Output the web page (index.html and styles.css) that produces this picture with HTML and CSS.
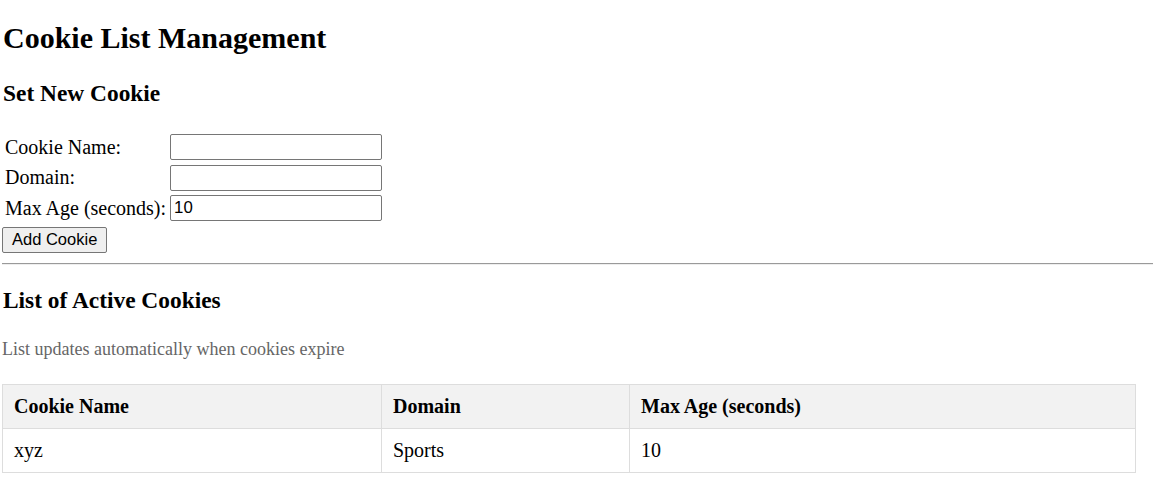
FILE: index.html
```html
<!DOCTYPE html>
<html>
<head>
<meta charset="utf-8">
<title>Cookie List Management</title>
<link rel="stylesheet" href="styles.css">
</head>
<body>
<h1 class="title">Cookie List Management</h1>
<h3 class="section first">Set New Cookie</h3>
<form class="cookie-form">
  <table class="form-table">
    <tr><td><label>Cookie Name:</label></td><td><input type="text" class="field"></td></tr>
    <tr><td><label>Domain:</label></td><td><input type="text" class="field"></td></tr>
    <tr><td><label>Max Age (seconds):</label></td><td><input type="text" class="field" value="10"></td></tr>
  </table>
  <div class="actions"><button type="button" class="add-btn">Add Cookie</button></div>
</form>
<hr class="divider">
<h3 class="section second">List of Active Cookies</h3>
<p class="note">List updates automatically when cookies expire</p>
<table class="cookie-table">
  <thead>
    <tr><th class="c1">Cookie Name</th><th class="c2">Domain</th><th class="c3">Max Age (seconds)</th></tr>
  </thead>
  <tbody>
    <tr><td>xyz</td><td>Sports</td><td>10</td></tr>
  </tbody>
</table>
</body>
</html>
```
FILE: styles.css
```css
html { background: #fff; }
body {
  margin: 0 0 0 2px;
  font-family: "Liberation Serif", "Times New Roman", serif;
  font-size: 20px;
  color: #000;
}
.title { font-size: 30px; margin: 21px 0 0 1px; line-height: 34px; }
.section { font-size: 23.4px; line-height: 27px; margin: 0 0 0 1px; }
.section.first { margin-top: 25px; margin-bottom: 24px; }
.section.second { margin-top: 22px; }
.cookie-form { margin: 0; }
.form-table { border-spacing: 2px; }
.form-table td { padding: 1px; }
.field {
  font-family: "Liberation Sans", Arial, sans-serif;
  font-size: 16.8px;
  width: 212px;
  height: 26px;
  box-sizing: border-box;
  padding: 1px 3px;
  border: 1px solid #767676;
  border-radius: 2px;
  margin: 0;
  vertical-align: middle;
  color: #000;
}
.actions { line-height: 27px; }
.add-btn {
  font-family: "Liberation Sans", Arial, sans-serif;
  font-size: 16.5px;
  padding: 1px 9px;
  height: 26px;
  border: 1px solid #767676;
  border-radius: 2px;
  background: #efefef;
  color: #000;
  margin: 0;
  vertical-align: middle;
}
.divider {
  margin: 10px 0 0 0;
  border: 0;
  border-top: 1px solid #9a9a9a;
  border-bottom: 1px solid #eee;
  height: 0;
}
.note { color: #666; font-size: 18px; line-height: 21px; margin: 25px 0 0 0; }
.cookie-table {
  border-collapse: collapse;
  width: 1134px;
  margin-top: 24px;
}
.cookie-table th, .cookie-table td {
  border: 1px solid #ddd;
  padding: 10px 11px;
  text-align: left;
  line-height: 23px;
}
.cookie-table th { background: #f2f2f2; font-weight: bold; }
.c1 { width: 356px; }
.c2 { width: 225px; }
```
